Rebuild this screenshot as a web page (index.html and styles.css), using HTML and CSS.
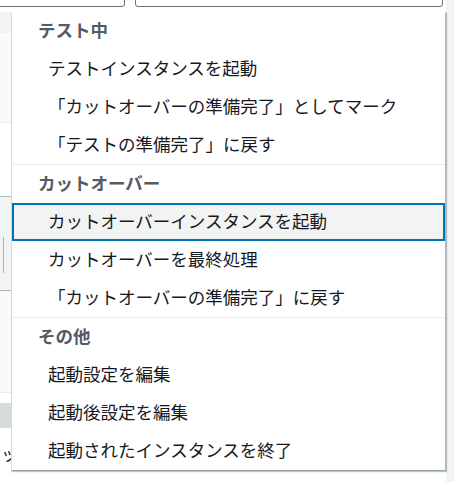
FILE: index.html
```html
<!DOCTYPE html>
<html lang="ja">
<head>
<meta charset="utf-8">
<link rel="stylesheet" href="styles.css">
</head>
<body>
<div class="page">
  <div class="main">
    <div class="filters">
      <div class="input input-a"></div>
      <div class="input input-b"></div>
    </div>
    <div class="band band-head"></div>
    <div class="band band-soft"></div>
    <div class="band band-white"></div>
    <div class="band band-grey"><span class="divider-v"></span></div>
    <div class="band band-soft2"></div>
    <div class="band band-white2"></div>
    <div class="band band-bar"></div>
    <div class="band band-text"><span class="peek">ッ</span></div>
  </div>
  <div class="track"></div>

  <div class="menu">
    <div class="group">
      <div class="group-title">テスト中</div>
      <div class="item">テストインスタンスを起動</div>
      <div class="item">「カットオーバーの準備完了」としてマーク</div>
      <div class="item">「テストの準備完了」に戻す</div>
    </div>
    <div class="group">
      <div class="group-title">カットオーバー</div>
      <div class="item item-active">カットオーバーインスタンスを起動</div>
      <div class="item">カットオーバーを最終処理</div>
      <div class="item">「カットオーバーの準備完了」に戻す</div>
    </div>
    <div class="group">
      <div class="group-title">その他</div>
      <div class="item">起動設定を編集</div>
      <div class="item">起動後設定を編集</div>
      <div class="item">起動されたインスタンスを終了</div>
    </div>
  </div>
</div>
</body>
</html>
```

FILE: styles.css
```css
html, body {
  margin: 0;
  padding: 0;
}
body {
  width: 454px;
  height: 482px;
  overflow: hidden;
  background: #ffffff;
  font-family: "Noto Sans CJK JP", "Noto Sans", sans-serif;
}
.page {
  position: relative;
  display: grid;
  grid-template-columns: 446px 8px;
  height: 482px;
}
.main {
  display: flex;
  flex-direction: column;
  overflow: hidden;
}
.track {
  background: #f2f3f3;
}
.filters {
  height: 12px;
  display: flex;
  gap: 10px;
  background: #ffffff;
}
.input {
  height: 11px;
  margin-top: -6px;
  border: 1px solid #687078;
  border-radius: 3px;
  background: #fff;
}
.input-a {
  margin-left: -10px;
  width: 133px;
}
.input-b {
  width: 306px;
}
.band { flex: none; position: relative; }
.band-head { height: 21px; background: #f2f3f3; }
.band-soft { height: 89px; background: #fafafa; border-bottom: 1px solid #eaeded; }
.band-white { height: 73px; background: #ffffff; border-bottom: 1px solid #aab7b8; }
.band-grey { height: 93px; background: #f2f3f3; border-bottom: 1px solid #aab7b8; }
.divider-v {
  position: absolute;
  left: 3px;
  top: 40px;
  width: 1px;
  height: 36px;
  background: #aab7b8;
}
.band-soft2 { height: 101px; background: #fafafa; border-bottom: 1px solid #eaeded; }
.band-white2 { height: 10px; background: #ffffff; }
.band-bar { height: 25px; background: #d5dbdb; }
.band-text { height: 54px; background: #ffffff; }
.peek {
  position: absolute;
  left: 1px;
  top: 16px;
  font-size: 17px;
  line-height: 20px;
  color: #16191f;
}

.menu {
  position: absolute;
  left: 11px;
  top: 12px;
  width: 433px;
  background: #ffffff;
  border-left: 1px solid #d5dbdb;
  border-right: 1px solid #aab7b8;
  border-bottom: 1px solid #95a5a6;
  box-shadow: 1px 1px 1px rgba(0, 28, 36, 0.25);
}
.group + .group {
  border-top: 1px solid #eaeded;
}
.group-title {
  box-sizing: border-box;
  height: 38px;
  line-height: 36px;
  padding-bottom: 2px;
  padding-left: 26px;
  font-size: 17.5px;
  font-weight: 700;
  color: #545b64;
}
.item {
  box-sizing: border-box;
  height: 38px;
  line-height: 36px;
  padding-bottom: 2px;
  padding-left: 36px;
  font-size: 17.5px;
  color: #16191f;
  white-space: nowrap;
}
.item-active {
  border: 2px solid #0073bb;
  padding-left: 34px;
  line-height: 32px;
  background: #f2f3f3;
}
```
